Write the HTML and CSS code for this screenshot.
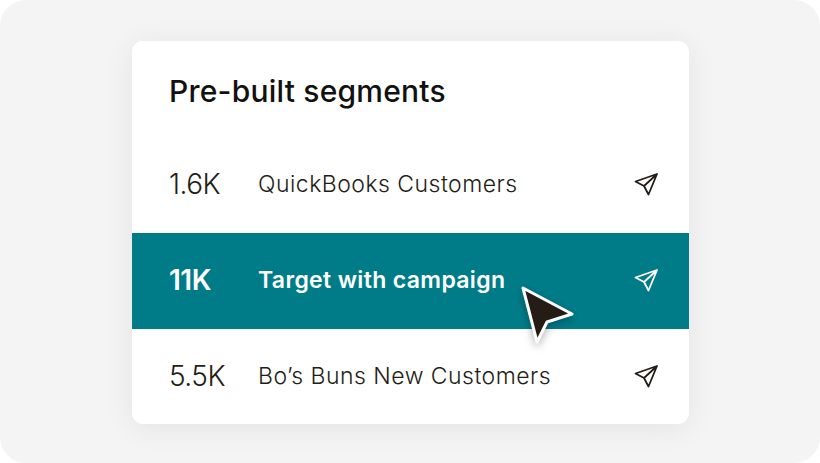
FILE: index.html
```html
<!DOCTYPE html>
<html>
	<head>
		<meta charset="utf-8">
		<title>Pre-built segments</title>
		<link rel="stylesheet" href="styles.css">
	</head>
	<body>
		<div class="stage">
			<div class="card">
				<h1>Pre-built segments</h1>
				<div class="row">
					<span class="count">1.6K</span>
					<span class="name">QuickBooks Customers</span>
					<svg class="send" viewBox="0 0 24 24"><path d="M23 2 1.500 9.500 10 14l4.500 8.500zM23 2 10 14"/></svg>
				</div>
				<div class="row active">
					<span class="count">11K</span>
					<span class="name">Target with campaign</span>
					<svg class="send" viewBox="0 0 24 24"><path d="M23 2 1.500 9.500 10 14l4.500 8.500zM23 2 10 14"/></svg>
					<svg class="cursor" viewBox="0 0 56 62"><path d="M4 4 53 30 28 38 18 58z"/></svg>
				</div>
				<div class="row">
					<span class="count">5.5K</span>
					<span class="name">Bo’s Buns New Customers</span>
					<svg class="send" viewBox="0 0 24 24"><path d="M23 2 1.500 9.500 10 14l4.500 8.500zM23 2 10 14"/></svg>
				</div>
			</div>
		</div>
	</body>
</html>
```

FILE: styles.css
```css
html, body {
	margin: 0;
	background-color: white;
}

.stage {
	height: 463px;
	box-sizing: border-box;
	padding: 41px 131px 39px 132px;
	background-color: #f4f4f4;
	border-radius: 26px;
	font-family: "Inter", "Liberation Sans", sans-serif;
	color: #241c15;
}

.card {
	height: 383px;
	display: flex;
	flex-direction: column;
	background-color: white;
	border-radius: 11px;
	box-shadow: 0 4px 30px rgba(0, 0, 0, 0.07);
	overflow: hidden;
}

h1 {
	margin: 0;
	height: 96px;
	flex: none;
	padding: 33px 0 0 37px;
	box-sizing: border-box;
	font-size: 30px;
	line-height: 34px;
	font-weight: 500;
	letter-spacing: 0.22px;
	color: #111;
}

.row {
	position: relative;
	height: 96px;
	flex: none;
	display: flex;
	align-items: center;
	padding: 0 31px 2px 37px;
	box-sizing: border-box;
}

.count {
	width: 89px;
	font-size: 28px;
	font-weight: 300;
	letter-spacing: -0.5px;
}

.name {
	flex: 1;
	font-size: 23px;
	font-weight: 300;
	letter-spacing: 0.48px;
}

.send {
	width: 24px;
	height: 24px;
	fill: none;
	stroke: #241c15;
	stroke-width: 1.800;
	stroke-linejoin: round;
}

.active {
	background-color: #007c89;
	color: white;
}

.active .count {
	font-weight: 600;
}

.active .name {
	font-weight: 600;
	letter-spacing: 0.35px;
}

.active .send {
	stroke: white;
}

.cursor {
	position: absolute;
	left: 387px;
	top: 51px;
	width: 56px;
	height: 62px;
	fill: #241c15;
	stroke: white;
	stroke-width: 3;
	stroke-linejoin: round;
	filter: drop-shadow(0 3px 4px rgba(0, 0, 0, 0.3));
}
```
